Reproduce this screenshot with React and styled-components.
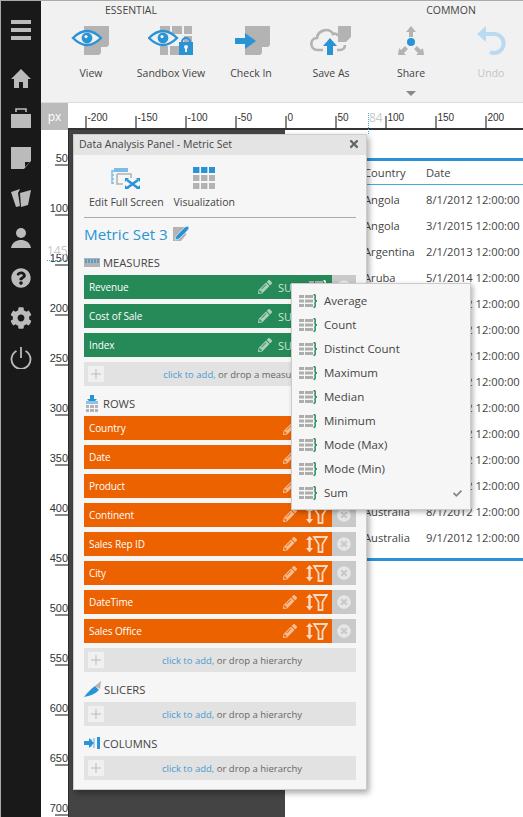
import styled, { createGlobalStyle } from "styled-components";
import { FaCog, FaQuestionCircle, FaPencilAlt, FaCheck, FaTimes, FaTimesCircle } from "react-icons/fa";

const BLUE = "#2a93d5";
const GRAY = "#b3b3b3";
const FONT = `"Open Sans", "Noto Sans", sans-serif`;

const GlobalStyle = createGlobalStyle`
	* { box-sizing: border-box; }
	html, body { margin: 0; padding: 0; background: #fff; }
	body { font-family: ${FONT}; color: #444; }
`;

// ---- icons ----

function PageShape({ x = 0, y = 0, w = 25, h = 29, fill = GRAY, bg = "#f1f1f1" }) {
	return (
		<g transform={`translate(${x} ${y})`}>
			<path d={`M0 0H${w}V${h - 10}L${w - 10} ${h}H0Z`} fill={fill} />
			<path d={`M${w - 8} ${h - 8}H${w - 1}L${w - 8} ${h - 1}Z`} fill={bg} />
		</g>
	);
}

function Eye({ x = 0, y = 0, bg = "#f1f1f1" }) {
	return (
		<g transform={`translate(${x} ${y})`}>
			<path d="M1 8Q15 -6 29 8Q15 22 1 8Z" fill={bg} stroke={BLUE} strokeWidth="2.4" />
			<circle cx="15" cy="8" r="5.4" fill={BLUE} />
			<circle cx="14" cy="6.6" r="1.6" fill={bg} />
		</g>
	);
}

const ViewIcon = () => (
	<svg width="40" height="32" viewBox="0 0 40 32">
		<PageShape x={13} y={1} />
		<Eye x={1} y={5} />
	</svg>
);

const SandboxIcon = () => (
	<svg width="46" height="32" viewBox="0 0 46 32">
		{[[12, 1, 10, 8], [24, 1, 10, 8], [36, 1, 8, 8], [36, 11, 8, 8], [12, 21, 8, 9], [22, 21, 9, 9]].map(([x, y, w, h]) => (
			<rect key={`${x}-${y}`} x={x} y={y} width={w} height={h} fill={GRAY} />
		))}
		<Eye x={0} y={5} />
		<rect x="31" y="17" width="14" height="13" fill={BLUE} />
		<path d="M34 17a4 4 0 0 1 8 0" fill="none" stroke={BLUE} strokeWidth="2" />
		<circle cx="38" cy="22" r="2" fill="#f1f1f1" />
		<rect x="37" y="22" width="2" height="5" fill="#f1f1f1" />
	</svg>
);

const CheckInIcon = () => (
	<svg width="40" height="32" viewBox="0 0 40 32">
		<path d="M14 1H39V20L29 30H14V22L23 16L14 10Z" fill={GRAY} />
		<path d="M31 22H38L31 29Z" fill="#f1f1f1" />
		<path d="M4 13H14V8L25 16L14 24V19H4Z" fill={BLUE} />
	</svg>
);

const SaveAsIcon = () => (
	<svg width="42" height="32" viewBox="0 0 42 32">
		<path d="M28 1H41V12L36 17H28Z" fill={GRAY} />
		<path d="M13 25H7C-1 24 0 13 7 13C8 5 19 2 23 9C25 8 27 9 28 11M27 25H30C33 25 35 23 35 20" fill="none" stroke={GRAY} strokeWidth="2.6" />
		<path d="M20 13L27 21H23V30H17V21H13Z" fill={BLUE} />
	</svg>
);

const ShareIcon = () => (
	<svg width="36" height="32" viewBox="0 0 36 32">
		<circle cx="18" cy="17" r="4" fill={BLUE} />
		<path d="M18 1L23 7H20V12H16V7H13Z" fill={GRAY} />
		<path d="M5 30L6 23L8 25L12 21L15 24L11 28L13 30Z" fill={GRAY} />
		<path d="M31 30L30 23L28 25L24 21L21 24L25 28L23 30Z" fill={GRAY} />
	</svg>
);

const UndoIcon = () => (
	<svg width="32" height="32" viewBox="0 0 32 32">
		<path d="M10 9H18A9.5 9.5 0 1 1 15 27" fill="none" stroke="#b9daf0" strokeWidth="4" />
		<path d="M11 1V17L2 9Z" fill="#b9daf0" />
	</svg>
);

const EditScreenIcon = () => (
	<svg width="30" height="22" viewBox="0 0 30 22">
		<rect x="3" y="1" width="14" height="4" fill="#7fbce4" />
		<path d="M1 3V17M1 4H3M1 8H3M1 12H3M1 16H3" stroke="#7fbce4" strokeWidth="1.4" fill="none" />
		<path d="M6 7H20V11M6 7V17H12" stroke={GRAY} strokeWidth="1.6" fill="none" />
		<path d="M16 13L27 21M27 13L16 21" stroke={BLUE} strokeWidth="2.4" />
		<path d="M14 11H18L14 15ZM29 11H25L29 15ZM14 22H18L14 18ZM29 22H25L29 18Z" fill={BLUE} />
	</svg>
);

const VizIcon = () => (
	<svg width="22" height="22" viewBox="0 0 22 22">
		{[0, 8, 16].map((y) =>
			[0, 8, 16].map((x) => <rect key={`${x}-${y}`} x={x} y={y} width="6.4" height="6" fill={y === 0 ? BLUE : GRAY} />)
		)}
	</svg>
);

const MetricEditIcon = () => (
	<svg width="17" height="17" viewBox="0 0 17 17">
		<path d="M0 2H13V10L8 16H0Z" fill={GRAY} />
		<path d="M3 11L12 2L15 1L16 3L15 5L6 14L2 15Z" fill={BLUE} stroke="#f6f6f6" strokeWidth="0.6" />
	</svg>
);

const MeasuresIcon = () => (
	<svg width="16" height="9" viewBox="0 0 16 9">
		<rect width="16" height="9" fill={GRAY} />
		<path d="M2 1V5M5 1V5M8 1V5M11 1V5M14 1V5" stroke={BLUE} strokeWidth="1.3" />
	</svg>
);

const RowsIcon = () => (
	<svg width="14" height="17" viewBox="0 0 14 17">
		<path d="M5 0H9V4H12L7 9L2 4H5Z" fill={BLUE} />
		<rect x="1" y="6" width="12" height="3" fill="#8cc4e8" />
		<path d="M1 10H4V13H1ZM5 10H9V13H5ZM10 10H13V13H10ZM1 14H4V17H1ZM5 14H9V17H5ZM10 14H13V17H10Z" fill={GRAY} />
	</svg>
);

const SlicersIcon = () => (
	<svg width="17" height="17" viewBox="0 0 17 17">
		<path d="M11 5L17 0L16 8Z" fill={GRAY} />
		<path d="M0 16C4 11 7 8 11 5L15 9C11 13 6 15 0 16Z" fill={BLUE} />
	</svg>
);

const ColumnsIcon = () => (
	<svg width="16" height="12" viewBox="0 0 16 12">
		<path d="M9 1H11V11H9ZM6 2H8V10H6Z" fill="#a9cfe9" />
		<rect x="13" y="0" width="3" height="12" fill={BLUE} />
		<path d="M0 4H5V1L10 6L5 11V8H0Z" fill={BLUE} />
	</svg>
);

const AggregateIcon = ({ brace = "#258a57" }) => (
	<svg width="19" height="15" viewBox="0 0 19 15">
		<path d="M0 1H5V4H0ZM6 1H14V4H6ZM0 5.5H5V8.500H0ZM6 5.500H14V8.500H6ZM0 10H5V13H0ZM6 10H14V13H6Z" fill="#adadad" />
		<path d="M14.500 0.500C17 0.500 16 3 16 5C16 6.500 17 7 18 7C17 7 16 7.500 16 9C16 11 17 13.500 14.500 13.500" fill="none" stroke={brace} strokeWidth="1.500" />
	</svg>
);

const SortFilterIcon = () => (
	<svg width="22" height="17" viewBox="0 0 22 17">
		<path d="M3.500 0L7 4H4.700V12H7L3.500 16.500L0 12H2.300V4H0Z" fill="currentColor" />
		<path d="M8 1H21L16.500 8V16H12.500V8Z" fill="none" stroke="currentColor" strokeWidth="1.800" />
	</svg>
);

const PlusIcon = () => (
	<svg width="10" height="10" viewBox="0 0 10 10">
		<path d="M5 0V10M0 5H10" stroke="#bbb" strokeWidth="1" />
	</svg>
);

const NavShapes = {
	menu: (
		<svg width="20" height="20" viewBox="0 0 20 20">
			<path d="M0 0H20V4H0ZM0 8H20V12H0ZM0 16H20V20H0Z" />
		</svg>
	),
	home: (
		<svg width="20" height="19" viewBox="0 0 20 19">
			<path d="M10 0L20 10H17V19H12V13H8V19H3V10H0Z" />
		</svg>
	),
	work: (
		<svg width="20" height="20" viewBox="0 0 20 20">
			<path d="M5 4V1H15V4" fill="none" stroke="currentColor" strokeWidth="1.600" />
			<rect y="6" width="20" height="14" />
		</svg>
	),
	note: (
		<svg width="20" height="22" viewBox="0 0 20 22">
			<path d="M0 0H20V14L13 22H0Z" />
			<path d="M14 15H19L14 20Z" fill="#191919" />
		</svg>
	),
	open: (
		<svg width="20" height="20" viewBox="0 0 20 20">
			<path d="M0 4L9 1L7 5L9 18L5 19Z" />
			<path d="M9 5L20 2L17 17L10 19Z" />
		</svg>
	),
	user: (
		<svg width="20" height="20" viewBox="0 0 20 20">
			<circle cx="10" cy="5" r="5" />
			<path d="M0 20C1 14 6 12 10 12C14 12 19 14 20 20Z" />
		</svg>
	),
	power: (
		<svg width="22" height="22" viewBox="0 0 22 22">
			<path d="M6.500 4A9.500 9.500 0 1 0 15.500 4" fill="none" stroke="currentColor" strokeWidth="1.800" />
			<path d="M11 0V11" fill="none" stroke="currentColor" strokeWidth="1.800" />
		</svg>
	),
};

// ---- left nav ----

const Page = styled.div`
	position: relative;
	display: flex;
	width: 523px;
	height: 817px;
	overflow: hidden;
`;

const Nav = styled.nav`
	flex: 0 0 41px;
	display: flex;
	flex-direction: column;
	align-items: center;
	padding-top: 9px;
	background: #191919;
	border-left: 1px solid #aaa;
	border-top: 1px solid #aaa;
	color: #bbb;
`;

const NavItem = styled.div`
	height: 40px;
	display: flex;
	align-items: center;
	justify-content: center;
	svg { fill: currentColor; display: block; }
	&:first-child { margin-bottom: 8px; }
`;

// ---- top toolbar ----

const Main = styled.div`
	flex: 1;
	min-width: 0;
	display: flex;
	flex-direction: column;
`;

const Toolbar = styled.header`
	height: 103px;
	background: #f1f1f1;
	border-top: 1px solid #aaa;
	border-bottom: 1px solid #ddd;
	padding-left: 10px;
	display: grid;
	grid-template-columns: repeat(6, 80px);
	grid-template-rows: 20px 1fr;
`;

const GroupLabel = styled.div`
	grid-column: ${(p) => p.$col} / span 2;
	grid-row: 1;
	text-align: center;
	font-size: 10.5px;
	line-height: 18px;
	color: #444;
`;

const ToolButton = styled.div`
	grid-row: 2;
	display: flex;
	flex-direction: column;
	align-items: center;
	padding-top: 4px;
`;

const ToolIcon = styled.div`
	height: 32px;
	display: flex;
	align-items: center;
`;

const ToolLabel = styled.div`
	margin-top: 8px;
	font-size: 10.500px;
	line-height: 16px;
	white-space: nowrap;
	color: ${(p) => (p.$disabled ? "#c4c4c4" : "#444")};
`;

const Caret = styled.div`
	margin-top: 10px;
	border-left: 5px solid transparent;
	border-right: 5px solid transparent;
	border-top: 5px solid #888;
`;

// ---- rulers ----

const RulerBar = styled.div`
	height: 27px;
	flex: none;
	display: flex;
`;

const UnitBox = styled.div`
	flex: 0 0 27px;
	background: #bbb;
	color: #fff;
	font-size: 12px;
	display: flex;
	align-items: center;
	justify-content: center;
`;

const HRuler = styled.div`
	flex: 1;
	min-width: 0;
	display: flex;
	padding-left: 17px;
	background: #fff;
	border-bottom: 2px solid #333;
	overflow: hidden;
`;

const HTick = styled.div`
	flex: 0 0 50px;
	display: flex;
	font-family: "Liberation Sans", sans-serif;
	font-size: 10px;
	line-height: 12px;
	color: #333;
	padding-top: 9px;
	i {
		width: 1.500px;
		height: 13px;
		margin-top: 4px;
		margin-right: 1px;
		background: #888;
	}
`;

const Stage = styled.div`
	flex: 1;
	min-height: 0;
	display: flex;
`;

const VRuler = styled.div`
	flex: 0 0 27px;
	background: #fff;
	display: flex;
	flex-direction: column;
	overflow: hidden;
`;

const VTick = styled.div`
	flex: 0 0 50px;
	width: 13px;
	margin-left: auto;
	display: flex;
	justify-content: flex-end;
	align-items: flex-end;
	border-bottom: 2px solid #888;
	font-family: "Liberation Sans", sans-serif;
	font-size: 11px;
	line-height: 12px;
	color: #333;
	&:first-child { flex-basis: 36px; }
`;

const Canvas = styled.div`
	flex: 0 0 217px;
	background: #444;
	border-left: 1px solid #2c2c2c;
`;

// ---- table behind the panel ----

const TablePane = styled.div`
	flex: 1;
	min-width: 0;
	background: #fff;
	padding-top: 28px;
`;

const GridFrame = styled.div`
	height: 403px;
	display: flex;
	flex-direction: column;
	border-top: 3px solid ${BLUE};
	border-bottom: 3px solid ${BLUE};
	overflow: hidden;
`;

const GridRow = styled.div`
	flex: 0 0 ${(p) => (p.$head ? "24px" : "26px")};
	display: flex;
	align-items: center;
	padding-left: 79px;
	font-size: 11.200px;
	white-space: nowrap;
	color: #444;
	${(p) => p.$head && "border-bottom: 1px solid #45a9e0; margin-bottom: 1px;"}
`;

const CountryCell = styled.div`
	flex: 0 0 62px;
`;

// ---- floating data panel ----

const Panel = styled.aside`
	position: absolute;
	left: 73px;
	top: 134px;
	width: 294px;
	height: 656px;
	background: #f6f6f6;
	border: 1px solid #ccc;
	box-shadow: 2px 3px 6px rgba(0, 0, 0, 0.35);
`;

const PanelTitle = styled.div`
	height: 20px;
	display: flex;
	align-items: center;
	justify-content: space-between;
	padding: 0 6px 2px 5px;
	background: #e4e4e4;
	font-size: 10.500px;
	color: #444;
	svg { color: #666; }
`;

const PanelBody = styled.div`
	padding: 12px 10px 0;
`;

const PanelTools = styled.div`
	display: flex;
	gap: 10px;
	padding: 0 0 7px 5px;
	border-bottom: 1px solid #aaa;
`;

const PanelTool = styled.div`
	display: flex;
	flex-direction: column;
	align-items: center;
	svg { display: block; }
`;

const PanelToolLabel = styled.div`
	margin-top: 5px;
	font-size: 10.500px;
	line-height: 16px;
	white-space: nowrap;
`;

const MetricTitle = styled.div`
	margin-top: 5px;
	height: 23px;
	padding-bottom: 2px;
	display: flex;
	align-items: center;
	gap: 5px;
	font-size: 15.200px;
	color: ${BLUE};
`;

const SectionHead = styled.div`
	display: flex;
	align-items: center;
	height: 16px;
	margin-top: ${(p) => p.$top || 9}px;
	margin-bottom: 5px;
	font-size: 11.200px;
	gap: 3px;
	svg { display: block; }
`;

const SectionIcon = styled.div`
	flex: 0 0 16px;
	display: flex;
	justify-content: center;
`;

const FieldList = styled.div`
	display: flex;
	flex-direction: column;
	gap: 5px;
`;

const FieldRow = styled.div`
	height: 24px;
	display: flex;
`;

const FieldMain = styled.div`
	flex: 1;
	display: flex;
	align-items: center;
	gap: 9px;
	padding: 0 4px 0 5px;
	background: ${(p) => (p.$kind === "measure" ? "#258a57" : "#ec6100")};
	color: #fff;
	font-size: 10px;
	font-weight: 500;
`;

const FieldName = styled.div`
	flex: 1;
	padding-bottom: 1px;
	letter-spacing: -0.1px;
`;

const Faded = styled.div`
	display: flex;
	align-items: center;
	color: ${(p) => (p.$bright ? "#fbd9c0" : p.$kind === "measure" ? "#a9d0b9" : "#f8bd92")};
	svg { display: block; }
`;

const SumLabel = styled.div`
	margin: 0 -6px 0 -3px;
	color: #cfe6d8;
	font-size: 11px;
	font-weight: 400;
	width: 28px;
`;

const FieldRemove = styled.div`
	flex: 0 0 24px;
	display: flex;
	align-items: center;
	justify-content: center;
	background: #c9c9c9;
	color: #e6e6e6;
`;

const AddBox = styled.div`
	height: 24px;
	display: flex;
	align-items: center;
	padding: 0 0 0 4px;
	background: #e2e2e2;
	font-size: 9.500px;
	color: #666;
`;

const AddPlus = styled.div`
	flex: 0 0 16px;
	height: 16px;
	background: #f0f0f0;
	display: flex;
	align-items: center;
	justify-content: center;
	svg { display: block; }
`;

const AddText = styled.div`
	flex: 1;
	padding-left: 4px;
	text-align: center;
	white-space: nowrap;
	overflow: hidden;
	a { color: #4a9bd0; }
`;

// ---- aggregate dropdown ----

const Menu = styled.ul`
	position: absolute;
	left: 291px;
	top: 283px;
	width: 180px;
	height: 227px;
	margin: 0;
	padding: 5px 0 0;
	list-style: none;
	background: #f6f6f6;
	border: 1px solid #ccc;
	box-shadow: 2px 2px 5px rgba(0, 0, 0, 0.3);
`;

const MenuItem = styled.li`
	height: 24px;
	display: flex;
	align-items: center;
	gap: 6px;
	padding: 0 8px 0 7px;
	font-size: 11.500px;
	color: #444;
	svg { display: block; flex: none; }
`;

const MenuText = styled.span`
	flex: 1;
	padding-bottom: 1px;
`;

// ---- ruler guides that lie over the rulers ----

const GuideLabel = styled.div`
	position: absolute;
	left: ${(p) => p.$x}px;
	top: ${(p) => p.$y}px;
	color: #c8c8c8;
	font-size: 12px;
	line-height: 14px;
`;

const GuideLine = styled.div`
	position: absolute;
	left: ${(p) => p.$x}px;
	top: ${(p) => p.$y}px;
	width: ${(p) => (p.$vertical ? 0 : p.$len)}px;
	height: ${(p) => (p.$vertical ? p.$len : 0)}px;
	border-left: ${(p) => (p.$vertical ? "1px dotted #45a9e0" : "0")};
	border-top: ${(p) => (p.$vertical ? "0" : "1px dotted #45a9e0")};
`;

const hTicks = [-200, -150, -100, -50, 0, 50, 100, 150, 200];
const vTicks = [50, 100, 150, 200, 250, 300, 350, 400, 450, 500, 550, 600, 650, 700];

const tableRows = [
	["Angola", "8/1/2012"],
	["Angola", "3/1/2015"],
	["Argentina", "2/1/2013"],
	["Aruba", "5/1/2014"],
	["Aruba", "1/1/2012"],
	["Aruba", "2/1/2012"],
	["Australia", "3/1/2012"],
	["Australia", "4/1/2012"],
	["Australia", "5/1/2012"],
	["Australia", "6/1/2012"],
	["Australia", "7/1/2012"],
	["Australia", "7/2/2012"],
	["Australia", "8/1/2012"],
	["Australia", "9/1/2012"],
	["Australia", "9/1/2012"],
];

const navItems = ["menu", "home", "work", "note", "open", "user", "help", "gear", "power"];

const measures = ["Revenue", "Cost of Sale", "Index"];
const rowFields = ["Country", "Date", "Product", "Continent", "Sales Rep ID", "City", "DateTime", "Sales Office"];
const aggregates = ["Average", "Count", "Distinct Count", "Maximum", "Median", "Minimum", "Mode (Max)", "Mode (Min)", "Sum"];

function NavIcon({ name }) {
	if (name === "help") return <FaQuestionCircle size={20} />;
	if (name === "gear") return <FaCog size={22} />;
	return NavShapes[name];
}

function Tool({ icon, label, disabled, caret }) {
	return (
		<ToolButton>
			<ToolIcon>{icon}</ToolIcon>
			<ToolLabel $disabled={disabled}>{label}</ToolLabel>
			{caret && <Caret />}
		</ToolButton>
	);
}

function Field({ name, kind }) {
	return (
		<FieldRow>
			<FieldMain $kind={kind}>
				<FieldName>{name}</FieldName>
				<Faded $kind={kind}>
					<FaPencilAlt size={14} />
				</Faded>
				{kind === "measure" ? (
					<>
						<SumLabel>SUM</SumLabel>
						<AggregateIcon brace="#fff" />
					</>
				) : (
					<Faded $kind={kind} $bright>
						<SortFilterIcon />
					</Faded>
				)}
			</FieldMain>
			<FieldRemove>
				<FaTimesCircle size={14} />
			</FieldRemove>
		</FieldRow>
	);
}

function AddRow({ what }) {
	return (
		<AddBox>
			<AddPlus>
				<PlusIcon />
			</AddPlus>
			<AddText>
				<a>click to add,</a> or drop a {what}
			</AddText>
		</AddBox>
	);
}

export default function App() {
	return (
		<Page>
			<GlobalStyle />
			<Nav>
				{navItems.map((n) => (
					<NavItem key={n}>
						<NavIcon name={n} />
					</NavItem>
				))}
			</Nav>

			<Main>
				<Toolbar>
					<GroupLabel $col={1}>ESSENTIAL</GroupLabel>
					<GroupLabel $col={5}>COMMON</GroupLabel>
					<Tool icon={<ViewIcon />} label="View" />
					<Tool icon={<SandboxIcon />} label="Sandbox View" />
					<Tool icon={<CheckInIcon />} label="Check In" />
					<Tool icon={<SaveAsIcon />} label="Save As" />
					<Tool icon={<ShareIcon />} label="Share" caret />
					<Tool icon={<UndoIcon />} label="Undo" disabled />
				</Toolbar>

				<RulerBar>
					<UnitBox>px</UnitBox>
					<HRuler>
						{hTicks.map((t) => (
							<HTick key={t}>
								<i />
								{t}
							</HTick>
						))}
					</HRuler>
				</RulerBar>

				<Stage>
					<VRuler>
						{vTicks.map((t) => (
							<VTick key={t}>{t}</VTick>
						))}
					</VRuler>
					<Canvas />
					<TablePane>
						<GridFrame>
							<GridRow $head>
								<CountryCell>Country</CountryCell>
								<div>Date</div>
							</GridRow>
							{tableRows.map(([country, date], i) => (
								<GridRow key={i}>
									<CountryCell>{country}</CountryCell>
									<div>{date} 12:00:00</div>
								</GridRow>
							))}
						</GridFrame>
					</TablePane>
				</Stage>
			</Main>

			<GuideLabel $x={369} $y={111}>84</GuideLabel>
			<GuideLine $vertical $x={368} $y={113} $len={21} />
			<GuideLabel $x={47} $y={244}>145</GuideLabel>
			<GuideLine $x={47} $y={260} $len={21} />

			<Panel>
				<PanelTitle>
					Data Analysis Panel - Metric Set
					<FaTimes size={12} />
				</PanelTitle>
				<PanelBody>
					<PanelTools>
						<PanelTool>
							<EditScreenIcon />
							<PanelToolLabel>Edit Full Screen</PanelToolLabel>
						</PanelTool>
						<PanelTool>
							<VizIcon />
							<PanelToolLabel>Visualization</PanelToolLabel>
						</PanelTool>
					</PanelTools>
					<MetricTitle>
						Metric Set 3
						<MetricEditIcon />
					</MetricTitle>

					<SectionHead $top={8}>
						<SectionIcon>
							<MeasuresIcon />
						</SectionIcon>
						MEASURES
					</SectionHead>
					<FieldList>
						{measures.map((m) => (
							<Field key={m} name={m} kind="measure" />
						))}
						<AddRow what="measure" />
					</FieldList>

					<SectionHead>
						<SectionIcon>
							<RowsIcon />
						</SectionIcon>
						ROWS
					</SectionHead>
					<FieldList>
						{rowFields.map((r) => (
							<Field key={r} name={r} kind="row" />
						))}
						<AddRow what="hierarchy" />
					</FieldList>

					<SectionHead>
						<SectionIcon>
							<SlicersIcon />
						</SectionIcon>
						SLICERS
					</SectionHead>
					<AddRow what="hierarchy" />

					<SectionHead>
						<SectionIcon>
							<ColumnsIcon />
						</SectionIcon>
						COLUMNS
					</SectionHead>
					<AddRow what="hierarchy" />
				</PanelBody>
			</Panel>

			<Menu>
				{aggregates.map((a) => (
					<MenuItem key={a}>
						<AggregateIcon />
						<MenuText>{a}</MenuText>
						{a === "Sum" && <FaCheck size={9} color="#888" />}
					</MenuItem>
				))}
			</Menu>
		</Page>
	);
}
